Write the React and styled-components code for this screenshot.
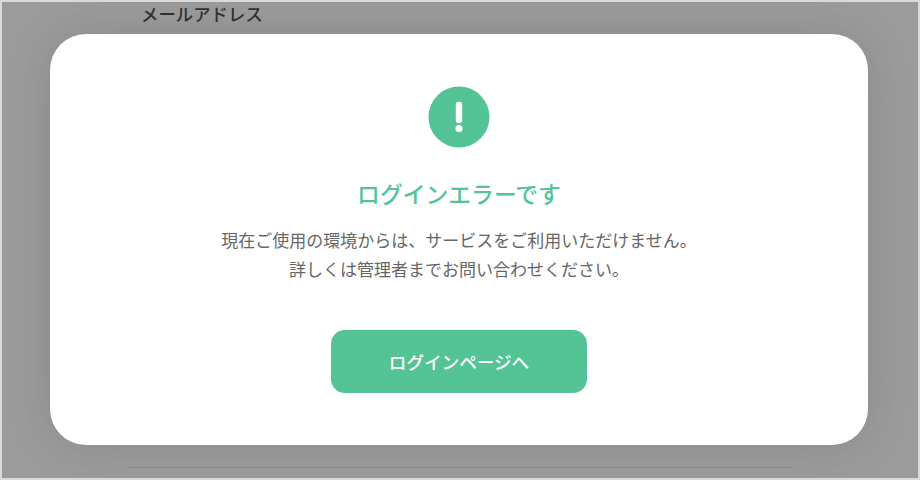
import React from "react";
import styled, { createGlobalStyle } from "styled-components";

const Global = createGlobalStyle`
  html, body { margin: 0; padding: 0; background: #dcdcdc; }
  * { box-sizing: border-box; }
`;

const FONT = `"Noto Sans CJK JP", "Noto Sans", sans-serif`;

const Frame = styled.div`
  position: relative;
  width: 920px;
  height: 480px;
  border: 2px solid #dadada;
  background: #9c9c9c;
  overflow: hidden;
  font-family: ${FONT};
`;

const Page = styled.div`
  height: 100%;
  padding: 0 125px 10px 125px;
  display: flex;
  flex-direction: column;
  justify-content: space-between;
`;

const FieldLabel = styled.div`
  padding-left: 14px;
  font-size: 17.4px;
  line-height: 24px;
  font-weight: 500;
  color: #333;
`;

const Divider = styled.div`
  height: 1px;
  background: #8a8a8a;
`;

const Modal = styled.div`
  position: absolute;
  left: 48px;
  top: 32px;
  width: 818px;
  height: 411px;
  background: #fff;
  border-radius: 36px;
  box-shadow: 0 0 50px rgba(0, 0, 0, 0.13);
  padding-top: 52px;
  display: flex;
  flex-direction: column;
  align-items: center;
`;

const IconCircle = styled.svg`
  display: block;
  width: 62px;
  height: 62px;
`;

const Title = styled.h2`
  margin: 31px 0 0;
  font-size: 22.8px;
  line-height: 30px;
  font-weight: 500;
  color: #54c496;
`;

const Message = styled.p`
  margin: 16px 0 0;
  font-size: 17px;
  line-height: 29px;
  font-weight: 400;
  color: #666;
  text-align: center;
`;

const Action = styled.button`
  margin-top: 47px;
  width: 256px;
  height: 63px;
  border: 0;
  border-radius: 14px;
  background: #54c496;
  color: #fff;
  font-family: ${FONT};
  font-size: 17.6px;
  font-weight: 500;
`;

export default function App() {
  return (
    <>
      <Global />
      <Frame>
        <Page>
          <FieldLabel>メールアドレス</FieldLabel>
          <Divider />
        </Page>
        <Modal>
          <IconCircle viewBox="0 0 62 62" aria-hidden="true">
            <circle cx="31" cy="31" r="30.5" fill="#54c496" />
            <path d="M31 19V34" stroke="#fff" strokeWidth="6.4" strokeLinecap="round" fill="none" />
            <circle cx="31" cy="42.5" r="3.6" fill="#fff" />
          </IconCircle>
          <Title>ログインエラーです</Title>
          <Message>
            現在ご使用の環境からは、サービスをご利用いただけません。
            <br />
            詳しくは管理者までお問い合わせください。
          </Message>
          <Action>ログインページへ</Action>
        </Modal>
      </Frame>
    </>
  );
}
